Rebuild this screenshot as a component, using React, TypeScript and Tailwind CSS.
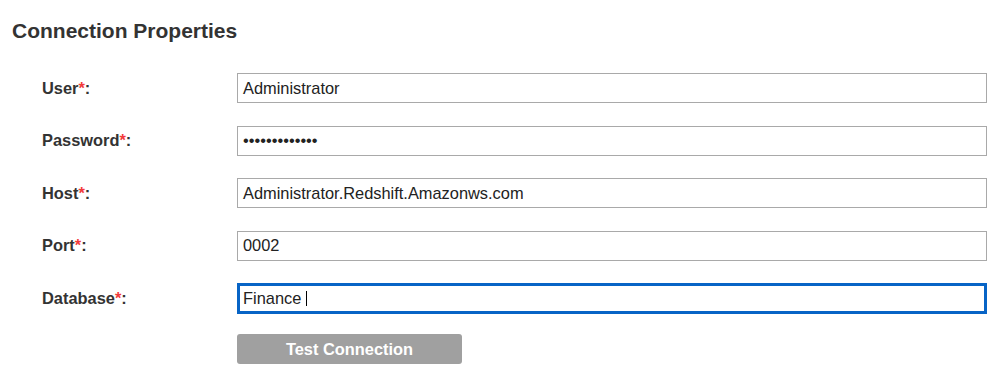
import React from "react";

type Field = {
  label: string;
  value: string;
  focused?: boolean;
};

const FIELDS: Field[] = [
  { label: "User", value: "Administrator" },
  { label: "Password", value: "•••••••••••••" },
  { label: "Host", value: "Administrator.Redshift.Amazonws.com" },
  { label: "Port", value: "0002" },
  { label: "Database", value: "Finance\u00a0", focused: true },
];

function FieldRow({ field }: { field: Field }) {
  return (
    <div className="flex h-[30px] items-center">
      <div className="w-[225px] shrink-0 pl-[30px] text-[16.4px] font-bold text-[#333]">
        {field.label}
        <span className="text-[#f23b3b]">*</span>:
      </div>
      <div
        className={
          field.focused
            ? "flex h-[31px] w-[750px] items-center border-[3px] border-[#0764c6] bg-white pl-[3px] text-[16.4px] text-[#222]"
            : "flex h-[30px] w-[750px] items-center border border-[#a9a9a9] bg-white pl-[5px] text-[16.4px] text-[#222]"
        }
      >
        <span className="whitespace-pre">{field.value}</span>
        {field.focused && <span className="h-[15px] w-px bg-black" />}
      </div>
    </div>
  );
}

export default function App() {
  return (
    <div
      className="min-h-[370px] w-[1002px] bg-white pl-[12px] pt-[19px]"
      style={{ fontFamily: '"Liberation Sans", Arial, sans-serif' }}
    >
      <h2 className="text-[21px] leading-[24px] font-bold text-[#333]">
        Connection Properties
      </h2>
      <div className="mt-[30px] flex flex-col gap-[22.5px]">
        {FIELDS.map((f) => (
          <FieldRow key={f.label} field={f} />
        ))}
      </div>
      <div className="mt-[21px] pl-[225px]">
        <button className="h-[30px] w-[225px] rounded-[3px] bg-[#a0a0a0] text-[16.4px] font-bold text-white">
          Test Connection
        </button>
      </div>
    </div>
  );
}
